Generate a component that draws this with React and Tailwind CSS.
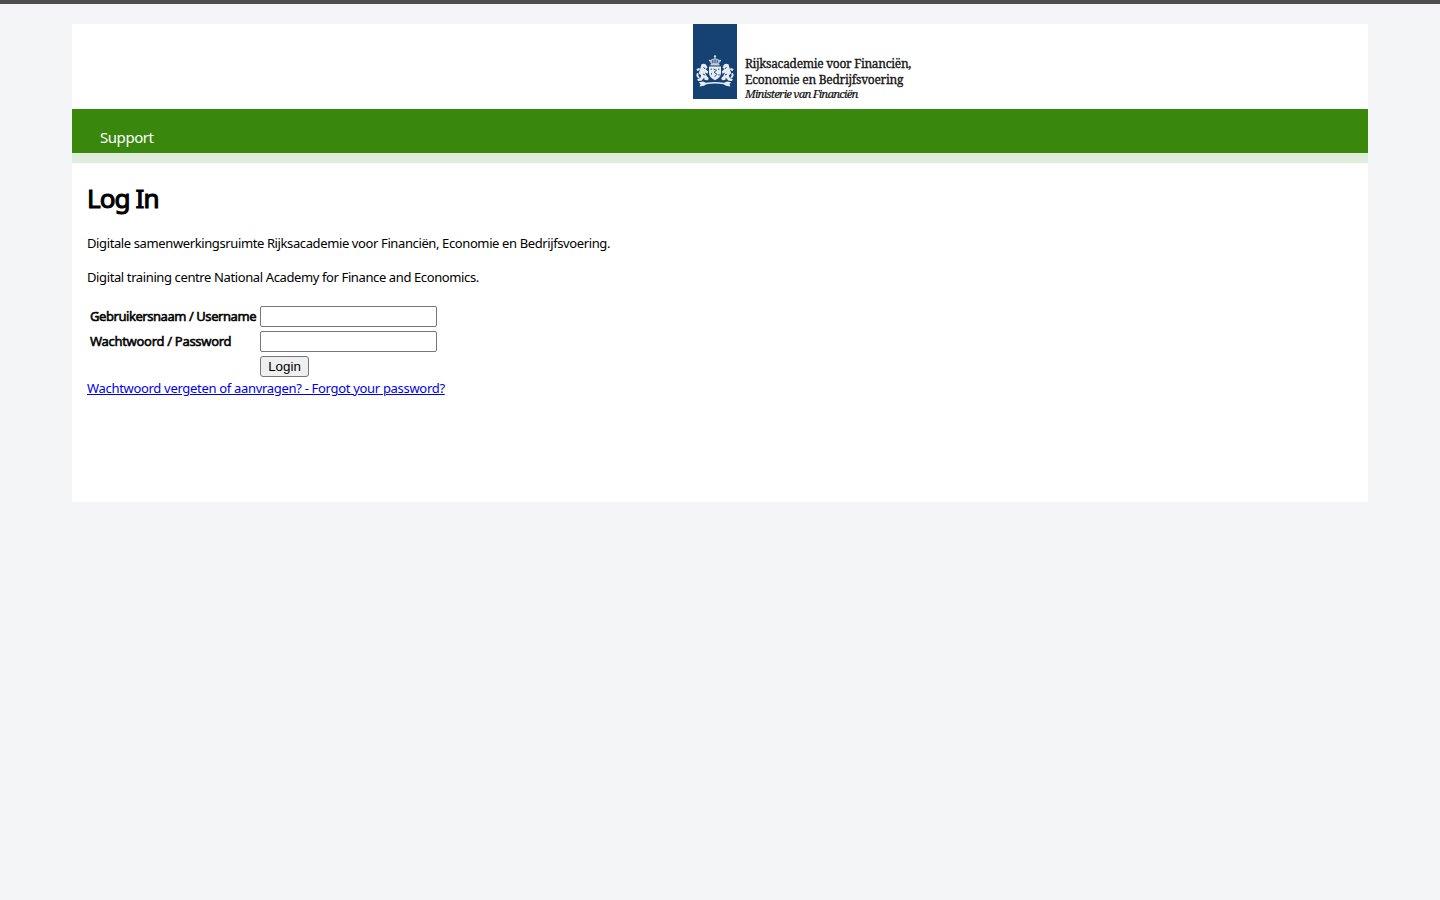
const SANS = "font-['Noto_Sans','Open_Sans',sans-serif]";

function CoatOfArms() {
  return (
    <svg width="44" height="75" viewBox="0 0 44 75" className="block shrink-0">
      <rect width="44" height="75" fill="#154273" />
      <g fill="#e6ecf2">
        <circle cx="22" cy="32.3" r="1.1" />
        <path d="M21.6 33h.8v2h-.8z" />
        <path d="M17 37.500q.5-2.800 5-3 4.500.2 5 3l-1.300 2.700h-7.400z" opacity=".75" />
        <circle cx="16.800" cy="36.600" r=".9" />
        <circle cx="27.200" cy="36.600" r=".9" />
        <path d="M17.500 40.200h9v1.200h-9z" />
        <path d="M16 42.500h12v6.500q0 4.500-6 7.300-6-2.800-6-7.300z" />
        <path d="M8.500 40.200q3-1.200 4.800.8l1.200 2.800-2 1.200 2.700 2.500-.6 2.200-2.700-1.300 1.800 3.700 2 2-.7 2.200-3.300-.3-.6-2.300-2.600 3-3.500.2-.8-1.600 3-1.200 1-2.600-2.500-2.200 1-2.800z" />
        <path d="M35.500 40.200q-3-1.200-4.800.8l-1.200 2.800 2 1.200-2.700 2.500.6 2.200 2.700-1.300-1.800 3.700-2 2 .7 2.200 3.300-.3.6-2.300 2.600 3 3.500.2.800-1.600-3-1.200-1-2.600 2.500-2.200-1-2.800z" />
        <path d="M5.500 54.500q-3.500-3-1.300-5.500l1.500.6q-1.200 1.800 1 3.900zM38.500 54.500q3.500-3 1.300-5.500l-1.500.6q1.200 1.800-1 3.900z" />
        <path d="M3.300 45l3-1 .7 1.600-2.300 1.700zM40.700 45l-3-1-.7 1.600 2.300 1.700z" />
        <path d="M6 58.200l4-.7 3 1.200q9-1.300 18 0l3-1.200 4 .7-1.500 2 1 2.200-4.500-.6-2.500-1.600q-8.500-1.200-17 0l-2.500 1.600-4.500.6 1-2.200z" />
      </g>
      <g fill="none" stroke="#154273" strokeWidth=".9">
        <path d="M20.500 45l3 1.300-2.500 2 3 2-2.500 2.500M18.200 44.500v1.500M25.800 44.500v1.500M18.500 49v1.500M26 50v1.500" />
        <path d="M19.800 36v3M22 35.500v3.500M24.200 36v3" />
        <path d="M10.500 43l1.500 2M33.500 43l-1.500 2M10 50l2 1M34 50l-2 1" />
      </g>
    </svg>
  );
}

function Field({ label, type, spacing }) {
  return (
    <div className="flex h-[25px] items-center">
      <label className={"mb-0.5 w-[170px] shrink-0 whitespace-nowrap text-[13px] leading-[18px] [-webkit-text-stroke:0.55px_#000] " + spacing}>{label}</label>
      <input
        type={type}
        aria-label={label}
        className="h-[21px] w-[177px] rounded-[2px] border border-[#767676] bg-white px-[2px] text-[13px] outline-none"
      />
    </div>
  );
}

export default function App() {
  return (
    <div className={"min-h-screen border-t-4 border-[#4d4d4d] bg-[#f3f5f7] px-[72px] pt-5 text-black " + SANS}>
      <div className="h-[478px] bg-white">
        <header className="flex h-[85px] gap-2 pl-[621px]">
          <CoatOfArms />
          <div className="flex flex-col whitespace-nowrap pt-8 font-['Noto_Serif','Liberation_Serif',serif] text-[12px] leading-[16px] text-[#111]">
            <span className="h-4 tracking-[-0.32px] [-webkit-text-stroke:0.3px_#111]">Rijksacademie voor Financiën,</span>
            <span className="h-4 tracking-[-0.27px] [-webkit-text-stroke:0.3px_#111]">Economie en Bedrijfsvoering</span>
            <span className="h-3 text-[11.500px] italic leading-[12px] tracking-[-0.83px] [-webkit-text-stroke:0.2px_#111]">Ministerie van Financiën</span>
          </div>
        </header>
        <nav className="h-[54px] border-b-[10px] border-[#e0edda] bg-[#39870c] pl-7 pt-[17px]">
          <a className="block w-max text-[15px] leading-[22px] tracking-[-0.45px] text-white">Support</a>
        </nav>
        <main className="flex flex-col items-start whitespace-nowrap pl-[15px]">
          <h1 className="mt-[17px] h-9 text-[26px] leading-9 tracking-[-0.9px] [-webkit-text-stroke:1.100px_#000]">Log In</h1>
          <p className="mt-[18px] text-[13px] leading-[18px] tracking-[-0.385px]">Digitale samenwerkingsruimte Rijksacademie voor Financiën, Economie en Bedrijfsvoering.</p>
          <p className="mt-4 text-[13px] leading-[18px] tracking-[-0.385px]">Digital training centre National Academy for Finance and Economics.</p>
          <form className="mt-[18px] pl-[3px]">
            <Field label="Gebruikersnaam / Username" type="text" spacing="tracking-[-0.44px]" />
            <Field label="Wachtwoord / Password" type="password" spacing="tracking-[-0.3px]" />
            <div className="flex h-[25px] items-center pl-[170px]">
              <button type="button" className="h-[21px] w-[49px] rounded-[3px] border border-[#767676] bg-[#efefef] font-['Liberation_Sans',sans-serif] text-[13.333px] leading-[19px]">Login</button>
            </div>
          </form>
          <a className="text-[13px] leading-[18px] tracking-[-0.31px] text-[#0000ee] underline">Wachtwoord vergeten of aanvragen? - Forgot your password?</a>
        </main>
      </div>
    </div>
  );
}
